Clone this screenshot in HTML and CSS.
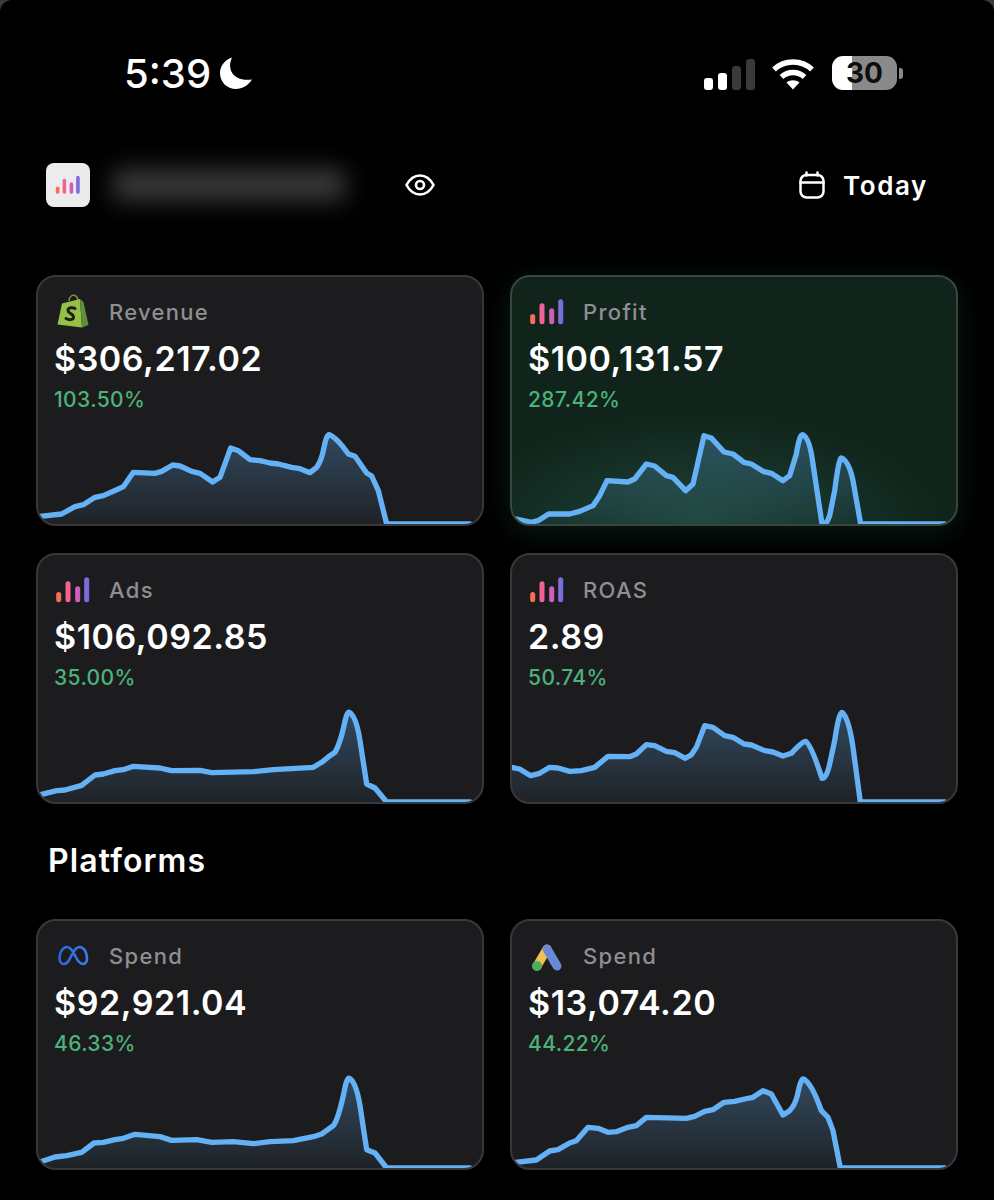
FILE: index.html
```html
<!DOCTYPE html>
<html lang="en">

<head>
    <meta charset="UTF-8" />
    <meta name="viewport" content="width=device-width, initial-scale=1.0" />
    <title>Dashboard</title>
    <link rel="stylesheet" href="styles.css">
</head>

<body>
    <svg class="defs" aria-hidden="true">
        <defs>
            <linearGradient id="bars-grad" gradientUnits="userSpaceOnUse" x1="2" y1="0" x2="34" y2="0">
                <stop offset="0" stop-color="#f8704a" />
                <stop offset="0.4" stop-color="#f0609f" />
                <stop offset="0.7" stop-color="#c75fc0" />
                <stop offset="1" stop-color="#6570e6" />
            </linearGradient>
            <linearGradient id="fade" x1="0" y1="0" x2="0" y2="1">
                <stop offset="0" stop-color="#64b1f5" stop-opacity="0.3" />
                <stop offset="1" stop-color="#64b1f5" stop-opacity="0.03" />
            </linearGradient>
            <linearGradient id="meta-grad" x1="0" y1="0" x2="1" y2="0">
                <stop offset="0" stop-color="#2a66e0" />
                <stop offset="1" stop-color="#3b7bf0" />
            </linearGradient>
            <symbol id="bars" viewBox="0 0 36 36">
                <g stroke="url(#bars-grad)" stroke-width="5" stroke-linecap="round">
                    <path d="M3.7 22.500V27.800" />
                    <path d="M13 11.800V27.800" />
                    <path d="M22.700 16.800V27.800" />
                    <path d="M31.700 7.800V27.800" />
                </g>
            </symbol>
        </defs>
    </svg>

    <div class="screen">
        <!-- status bar -->
        <div class="status">
            <span class="clock">5:39</span>
            <svg class="moon" viewBox="0 0 32 32">
                <path d="M12 0.500C6.500 12 13 25 32 22.500C28 28.500 22.500 32 16 32C7 32 0 25 0 16C0 9 5 2.500 12 0.500Z" fill="#fff" />
            </svg>
            <div class="status-right">
                <div class="signal">
                    <span class="sig sig-1"></span>
                    <span class="sig sig-2"></span>
                    <span class="sig sig-3"></span>
                    <span class="sig sig-4"></span>
                </div>
                <svg class="wifi" viewBox="0 0 44 33">
                    <path d="M3 12.500C13.500 2.500 30.500 2.500 41 12.500" />
                    <path d="M10.500 20C17 14 27 14 33.500 20" />
                    <path d="M22 32.500L15.500 25.500C19 22.500 25 22.500 28.500 25.500Z" fill="#fff" stroke="none" />
                </svg>
                <div class="battery">
                    <div class="battery-body">30</div>
                    <div class="battery-nub"></div>
                </div>
            </div>
        </div>

        <!-- account header -->
        <div class="topbar">
            <div class="logo">
                <svg class="logo-bars" viewBox="0 0 36 36"><use href="#bars" /></svg>
            </div>
            <div class="blurred"></div>
            <svg class="eye" viewBox="0 0 30 24">
                <path d="M1.500 12C5 5.500 10 2.500 15 2.500C20 2.500 25 5.500 28.500 12C25 18.500 20 21.500 15 21.500C10 21.500 5 18.500 1.500 12Z" />
                <circle cx="15" cy="12" r="4" />
            </svg>
            <div class="date-filter">
                <svg class="calendar" viewBox="0 0 26 28">
                    <rect x="1.500" y="4" width="23" height="22.500" rx="6" />
                    <path d="M1.500 11.500H24.500M7.500 1.500V4.500M18.500 1.500V4.500" />
                </svg>
                <span class="today">Today</span>
            </div>
        </div>

        <div class="cards">
            <div class="card">
                <div class="card-head">
                    <svg class="card-icon" viewBox="0 0 36 36">
                        <path d="M14 7C14 2 18 0.500 20 1.500C22.500 2.500 23 5 23 8" fill="none" stroke="#7f9c3f" stroke-width="1.400" />
                        <path d="M2.500 30.500L7 9.500L25 5L27 33.500Z" fill="#95bf47" />
                        <path d="M25 5L28.500 8L33.500 31L27 33.500Z" fill="#5e8e3e" />
                        <path d="M20 14.500C17.500 13 13 13.500 13 16.500C13 19.500 18.500 19.500 18.500 23C18.500 26 14.500 26.500 11 24.500" fill="none" stroke="#1a1f12" stroke-width="3" stroke-linecap="round" />
                    </svg>
                    <span class="card-label">Revenue</span>
                </div>
                <div class="card-value">$306,217.02</div>
                <div class="card-delta">103.50%</div>
                <svg class="chart" viewBox="54 444 1332 336">
                    <path fill="url(#fade)" d="M60 757L125 750L165 728L190 722L225 700L250 695L295 675L310 668L340 625L405 628L425 622L458 603L480 606L515 622L540 628L578 654L600 640L632 552L655 560L690 587L720 590L750 597L775 600L815 610L840 614L870 626L890 610Q905 590 912 550Q920 510 928 512Q950 520 985 570L1005 577L1040 627L1055 636L1075 680L1100 780V790H60Z" />
                    <path class="line" d="M60 757L125 750L165 728L190 722L225 700L250 695L295 675L310 668L340 625L405 628L425 622L458 603L480 606L515 622L540 628L578 654L600 640L632 552L655 560L690 587L720 590L750 597L775 600L815 610L840 614L870 626L890 610Q905 590 912 550Q920 510 928 512Q950 520 985 570L1005 577L1040 627L1055 636L1075 680L1100 780H1350" />
                </svg>
            </div>

            <div class="card card-glow">
                <div class="card-head">
                    <svg class="card-icon" viewBox="0 0 36 36"><use href="#bars" /></svg>
                    <span class="card-label">Profit</span>
                </div>
                <div class="card-value">$100,131.57</div>
                <div class="card-delta">287.42%</div>
                <svg class="chart" viewBox="52 444 1332 336">
                    <path fill="url(#fade)" d="M65 765L110 775L130 770L162 750L225 750L255 742L295 725L315 695L337 650L400 654L420 645L455 600L480 606L515 635L535 640L573 680L595 660L628 515L650 522L688 564L715 570L748 595L770 600L805 622L830 628L865 650L885 635L905 570Q915 510 924 512Q945 520 955 600L982 780Q995 785 1005 755L1020 680Q1033 580 1040 582Q1062 590 1075 650L1098 780V790H65Z" />
                    <path class="line" d="M65 765L110 775L130 770L162 750L225 750L255 742L295 725L315 695L337 650L400 654L420 645L455 600L480 606L515 635L535 640L573 680L595 660L628 515L650 522L688 564L715 570L748 595L770 600L805 622L830 628L865 650L885 635L905 570Q915 510 924 512Q945 520 955 600L982 780Q995 785 1005 755L1020 680Q1033 580 1040 582Q1062 590 1075 650L1098 780H1350" />
                </svg>
            </div>

            <div class="card">
                <div class="card-head">
                    <svg class="card-icon" viewBox="0 0 36 36"><use href="#bars" /></svg>
                    <span class="card-label">Ads</span>
                </div>
                <div class="card-value">$106,092.85</div>
                <div class="card-delta">35.00%</div>
                <svg class="chart" viewBox="54 438 1332 336">
                    <path fill="url(#fade)" d="M62 752L110 740L135 738L185 724L225 693L250 690L285 680L310 677L340 667L420 672L455 680L540 679L575 686L700 683L760 677L880 670L905 655L930 635L945 625Q960 600 972 545Q980 503 988 505Q1008 515 1020 590L1040 720L1065 732L1100 774V790H62Z" />
                    <path class="line" d="M62 752L110 740L135 738L185 724L225 693L250 690L285 680L310 677L340 667L420 672L455 680L540 679L575 686L700 683L760 677L880 670L905 655L930 635L945 625Q960 600 972 545Q980 503 988 505Q1008 515 1020 590L1040 720L1065 732L1100 774H1350" />
                </svg>
            </div>

            <div class="card">
                <div class="card-head">
                    <svg class="card-icon" viewBox="0 0 36 36"><use href="#bars" /></svg>
                    <span class="card-label">ROAS</span>
                </div>
                <div class="card-value">2.89</div>
                <div class="card-delta">50.74%</div>
                <svg class="chart" viewBox="52 438 1332 336">
                    <path fill="url(#fade)" d="M48 670L75 675L108 695L135 688L165 670L190 672L225 682L260 680L300 670L340 637L405 638L425 630L455 602L480 605L515 622L540 626L572 643L590 632L605 610L630 545L655 550L690 575L715 580L748 600L770 603L810 620L835 624L865 636L890 628Q925 590 932 592Q948 598 982 703Q995 705 1005 660L1020 590Q1033 503 1042 505Q1062 520 1075 610L1097 774V790H48Z" />
                    <path class="line" d="M48 670L75 675L108 695L135 688L165 670L190 672L225 682L260 680L300 670L340 637L405 638L425 630L455 602L480 605L515 622L540 626L572 643L590 632L605 610L630 545L655 550L690 575L715 580L748 600L770 603L810 620L835 624L865 636L890 628Q925 590 932 592Q948 598 982 703Q995 705 1005 660L1020 590Q1033 503 1042 505Q1062 520 1075 610L1097 774H1350" />
                </svg>
            </div>
        </div>

        <div class="section-title">Platforms</div>

        <div class="cards">
            <div class="card">
                <div class="card-head">
                    <svg class="card-icon" viewBox="0 0 36 36">
                        <path d="M9 26C6 26 4.500 23.500 4.500 20C4.500 14 8 9 12 9C15.500 9 18 13 20.500 18.500C23 23.500 25 26 28 26C30.500 26 32 23.500 32 20C32 14 28.500 9 24.500 9C21 9 18.500 13 16 18.500C13.500 23.500 12 26 9 26Z" fill="none" stroke="url(#meta-grad)" stroke-width="2.600" />
                    </svg>
                    <span class="card-label">Spend</span>
                </div>
                <div class="card-value">$92,921.04</div>
                <div class="card-delta">46.33%</div>
                <svg class="chart" viewBox="54 441 1332 336">
                    <path fill="url(#fade)" d="M62 758L105 744L140 740L185 730L222 702L250 700L285 692L310 688L345 676L420 683L455 694L530 692L575 700L640 698L700 704L750 698L820 695L880 683L905 675L940 650Q955 630 972 550Q980 506 988 508Q1008 518 1020 590L1040 722L1065 732L1100 777V790H62Z" />
                    <path class="line" d="M62 758L105 744L140 740L185 730L222 702L250 700L285 692L310 688L345 676L420 683L455 694L530 692L575 700L640 698L700 704L750 698L820 695L880 683L905 675L940 650Q955 630 972 550Q980 506 988 508Q1008 518 1020 590L1040 722L1065 732L1100 777H1350" />
                </svg>
            </div>

            <div class="card">
                <div class="card-head">
                    <svg class="card-icon" viewBox="0 0 36 36">
                        <path d="M18 11L8 28" stroke="#f2c04c" stroke-width="9" stroke-linecap="round" />
                        <path d="M18 11L28 28" stroke="#6a89d4" stroke-width="9" stroke-linecap="round" />
                        <circle cx="8" cy="28" r="5" fill="#4fae5b" />
                    </svg>
                    <span class="card-label">Spend</span>
                </div>
                <div class="card-value">$13,074.20</div>
                <div class="card-delta">44.22%</div>
                <svg class="chart" viewBox="52 441 1332 336">
                    <path fill="url(#fade)" d="M62 760L125 753L165 726L190 722L225 702L245 695L280 655L310 658L340 670L365 668L400 655L425 650L455 625L575 628L600 622L630 607L655 602L688 580L720 577L750 570L775 565L805 545L830 555L865 618L885 605Q900 590 908 560Q918 508 926 510Q950 520 980 605L1000 625L1015 665L1037 777V790H62Z" />
                    <path class="line" d="M62 760L125 753L165 726L190 722L225 702L245 695L280 655L310 658L340 670L365 668L400 655L425 650L455 625L575 628L600 622L630 607L655 602L688 580L720 577L750 570L775 565L805 545L830 555L865 618L885 605Q900 590 908 560Q918 508 926 510Q950 520 980 605L1000 625L1015 665L1037 777H1350" />
                </svg>
            </div>
        </div>
    </div>
</body>

</html>
```

FILE: styles.css
```css
* {
    margin: 0;
    padding: 0;
    box-sizing: border-box;
}

body {
    font-family: 'Inter', sans-serif;
    background: #3a3a3c;
    color: white;
    width: 994px;
    height: 1200px;
    overflow: hidden;
}

.defs {
    display: block;
    width: 0;
    height: 0;
}

.screen {
    background: #000;
    height: 1200px;
    border-radius: 12px 12px 0 0;
    overflow: hidden;
}

/* Status bar */
.status {
    display: flex;
    align-items: center;
    height: 146px;
    padding: 0 91px 0 124px;
}

.clock {
    font-size: 40px;
    font-weight: 500;
}

.moon {
    width: 32px;
    height: 32px;
    margin-left: 9px;
}

.status-right {
    display: flex;
    align-items: center;
    margin-left: auto;
}

.signal {
    display: flex;
    align-items: flex-end;
    gap: 5px;
    height: 31px;
    margin-top: 2px;
}

.sig {
    width: 9px;
    border-radius: 3px;
    background: #fff;
}

.sig-1 { height: 12px; }
.sig-2 { height: 17px; }
.sig-3 { height: 24px; background: #3a3a3c; }
.sig-4 { height: 31px; background: #3a3a3c; }

.wifi {
    width: 44px;
    height: 33px;
    margin-left: 16px;
    fill: none;
    stroke: #fff;
    stroke-width: 5.500;
}

.battery {
    display: flex;
    align-items: center;
    margin-left: 17px;
}

.battery-body {
    width: 65px;
    height: 34px;
    border-radius: 11px;
    background: linear-gradient(90deg, #fff 30%, #8a8a8a 30%);
    color: #0d0d0d;
    font-size: 28px;
    font-weight: 700;
    line-height: 34px;
    text-align: center;
}

.battery-nub {
    width: 4px;
    height: 11px;
    margin-left: 2px;
    border-radius: 0 3px 3px 0;
    background: #8a8a8a;
}

/* Account row */
.topbar {
    display: flex;
    align-items: center;
    height: 44px;
    margin: 17px 66px 0 46px;
}

.logo {
    display: flex;
    align-items: center;
    justify-content: center;
    width: 44px;
    height: 44px;
    border-radius: 8px;
    background: #ececee;
}

.logo-bars {
    width: 26px;
    height: 26px;
}

.blurred {
    width: 232px;
    height: 30px;
    margin-left: 23px;
    background: #3e3e3e;
    filter: blur(12px);
}

.eye {
    width: 30px;
    height: 24px;
    margin-left: 60px;
    fill: none;
    stroke: #fff;
    stroke-width: 2.600;
}

.date-filter {
    display: flex;
    align-items: center;
    gap: 18px;
    margin-left: auto;
}

.calendar {
    width: 26px;
    height: 28px;
    fill: none;
    stroke: #fff;
    stroke-width: 2.500;
    stroke-linecap: round;
}

.today {
    font-size: 26px;
    font-weight: 600;
    letter-spacing: 1.600px;
}

/* Cards */
.cards {
    display: grid;
    grid-template-columns: 448px 448px;
    gap: 27px 26px;
    margin: 68px 0 0 36px;
}

.card {
    display: flex;
    flex-direction: column;
    height: 251px;
    background: #1c1c1e;
    border: 2px solid #38383a;
    border-radius: 20px;
    overflow: hidden;
}

.card-glow {
    background: radial-gradient(ellipse 55% 45% at 42% 100%, #1e4338 0%, #10241b 100%);
    border-color: #37463f;
    box-shadow: 0 6px 30px rgba(40, 130, 80, 0.22);
}

.card-head {
    display: flex;
    align-items: center;
    gap: 18px;
    margin: 17px 0 0 17px;
}

.card-icon {
    width: 36px;
    height: 36px;
    overflow: visible;
}

.card-label {
    font-size: 22px;
    font-weight: 500;
    color: #8e8e93;
    letter-spacing: 1.300px;
}

.card-value {
    margin: 9px 0 0 16px;
    font-size: 34px;
    font-weight: 600;
    line-height: 40px;
    letter-spacing: 0.550px;
}

.card-delta {
    margin: 9px 0 0 16px;
    font-size: 21px;
    font-weight: 500;
    line-height: 24px;
    letter-spacing: 0.400px;
    color: #4cb27a;
}

.chart {
    display: block;
    width: 444px;
    height: 112px;
}

.line {
    fill: none;
    stroke: #64b1f5;
    stroke-width: 16;
    stroke-linejoin: round;
    stroke-linecap: round;
}

.section-title {
    margin: 37px 0 0 48px;
    height: 40px;
    font-size: 32px;
    font-weight: 600;
    line-height: 40px;
    letter-spacing: 1.100px;
}

.section-title + .cards {
    margin-top: 38px;
}
```
